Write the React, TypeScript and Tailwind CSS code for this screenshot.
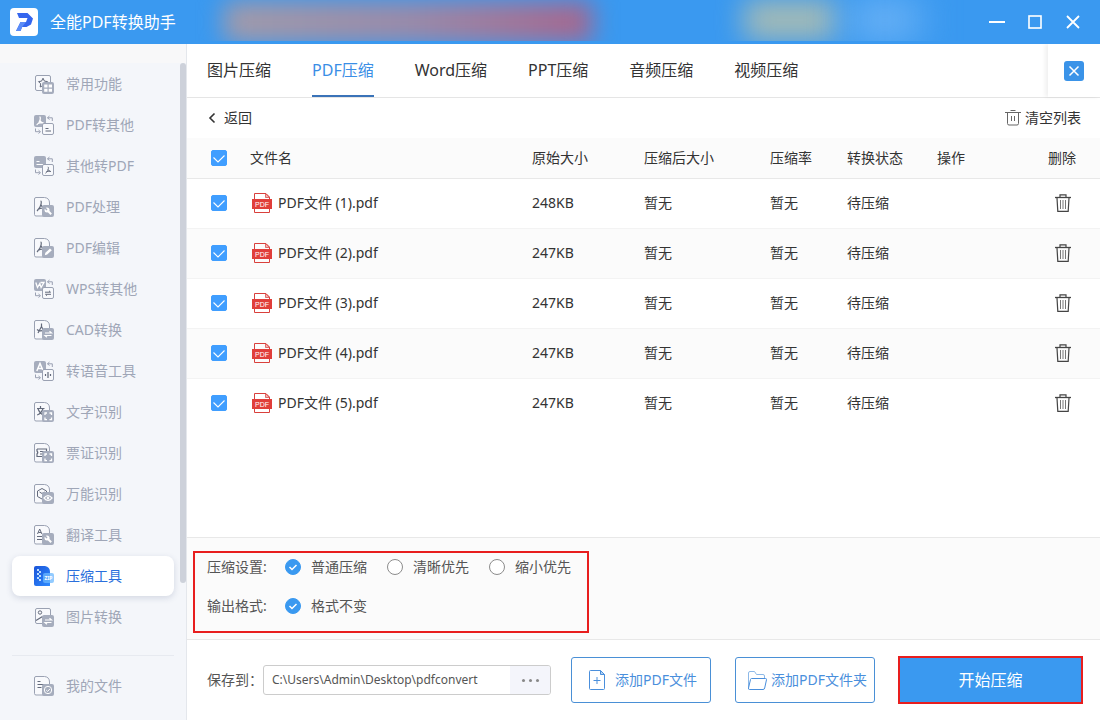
import { useState } from 'react';
import type { ReactNode } from 'react';

const LINE = '#9aa1b2';
const FILL = '#a6adbd';
const DARK = '#636a7b';

interface IconProps {
  children?: ReactNode;
  badge?: ReactNode;
}

// 文档 + 右下角徽标
function DocIcon({ children, badge }: IconProps) {
  return (
    <svg viewBox="0 0 20 20" className="w-5 h-5 shrink-0" fill="none" aria-hidden="true">
      <path d="M2 .5h8.5q5 .5 5 5.5v13H2A1.5 1.5 0 0 1 .5 17.5V2A1.5 1.5 0 0 1 2 .5z" stroke={LINE} fill="#f8f9fc" />
      {children}
      <rect x="8" y="8" width="12" height="12" rx="2" fill={FILL} />
      {badge}
    </svg>
  );
}

// 两个方块互相转换
function SwapIcon({ children, badge }: IconProps) {
  return (
    <svg viewBox="0 0 20 20" className="w-5 h-5 shrink-0" fill="none" aria-hidden="true">
      <rect width="12" height="12" rx="2" fill={FILL} />
      {children}
      <rect x="8.5" y="8.5" width="11" height="11" rx="1.5" stroke={LINE} fill="#f8f9fc" />
      {badge}
      <path d="M15.5 1l-2 1.8 2 1.7M13.5 2.8h4.8V6" stroke={LINE} />
      <path d="M1.5 13.5v3.2h4.3M4.5 15l2 1.7-2 1.8" stroke={LINE} />
    </svg>
  );
}

function PictureIcon({ children, badge }: IconProps) {
  return (
    <svg viewBox="0 0 20 20" className="w-5 h-5 shrink-0" fill="none" aria-hidden="true">
      <rect x="1.5" y="1.5" width="15" height="15" rx="1.5" stroke={LINE} fill="#f8f9fc" />
      {children}
      <rect x="8" y="8" width="12" height="12" rx="2" fill={FILL} />
      {badge}
    </svg>
  );
}

const acrobat = 'M6.500 4c1 0 .8 1.500.6 2.800C6.700 9 5.200 12 3 14M6.800 7.500c.6 1.500 1.500 2.500 3 3.500M3.800 12.500c1.500-1 3.500-1.400 5.500-1.500';

const wrench = (
  <>
    <circle cx="13" cy="13" r="2.500" fill="#fff" />
    <path d="M14 14l3.200 3.200" stroke="#fff" strokeWidth="2" />
    <path d="M10.500 10.500l2.500 2.500" stroke={FILL} strokeWidth="1.400" />
  </>
);
const scan = (
  <path d="M11 13v-2h2M15.500 11h2v2M17.500 15.500v2.200h-2M13 17.700h-2v-2.200" stroke="#fff" strokeWidth="1.300" />
);
const exchange = (
  <path d="M11 13h6.500l-2-1.800M17.500 15.500H11l2 1.800" stroke="#fff" strokeWidth="1.200" />
);

const navItems = [
  {
    label: '常用功能',
    icon: (
      <PictureIcon badge={<path d="M10.200 10.400h3.300v3.100h-3.300zM14.700 10.400H18v3.100h-3.300zM10.200 14.700h3.300v3.100h-3.300zM14.700 14.700H18v3.100h-3.300z" fill="#fff" />}>
        <path d="M9 4.200l1.400 2.900 3.100.5-2.200 2.200.5 3.200L9 11.500l-2.800 1.500.5-3.200-2.200-2.200 3.100-.5z" stroke={DARK} />
      </PictureIcon>
    ),
  },
  {
    label: 'PDF转其他',
    icon: (
      <SwapIcon badge={<path d="M11.500 13.500h3M11.500 16h5.500" stroke={DARK} />}>
        <path d="M5.500 2c1 0 .9 1.500.6 2.800C5.600 7 4.300 9 2.600 10M6 5.500C6.800 7 8 8 9.800 8.200M3.600 8.600c1.500-.7 3-.9 4.800-.9" stroke="#fff" strokeWidth="1.300" />
      </SwapIcon>
    ),
  },
  {
    label: '其他转PDF',
    icon: (
      <SwapIcon badge={<path d="M13.800 11c.9 0 .7 1.200.4 2.200-.4 1.600-1.300 3-2.700 4M14.100 13.600c.6 1.100 1.500 1.800 2.900 2M12.300 15.800c1.200-.5 2.400-.6 3.700-.6" stroke={DARK} />}>
        <path d="M2.500 5.500h3M2.500 8.500h7" stroke="#fff" strokeWidth="1.200" />
      </SwapIcon>
    ),
  },
  { label: 'PDF处理', icon: <DocIcon badge={wrench}><path d={acrobat} stroke={DARK} strokeWidth="1.200" /></DocIcon> },
  {
    label: 'PDF编辑',
    icon: (
      <DocIcon badge={<path d="M10.800 17.200l.6-2.400 4.600-4.400 1.800 1.800-4.600 4.400z" fill="#fff" />}>
        <path d={acrobat} stroke={DARK} strokeWidth="1.200" />
      </DocIcon>
    ),
  },
  {
    label: 'WPS转其他',
    icon: (
      <SwapIcon badge={<path d="M11 13.200h5.500l-1.500-1.400M17 15.300h-5.500l1.500 1.400" stroke={DARK} />}>
        <path d="M1.800 3.500l1.700 5 2.300-4 1.300 4 2.900-5H6.500" stroke="#fff" strokeWidth="1.300" />
      </SwapIcon>
    ),
  },
  {
    label: 'CAD转换',
    icon: (
      <DocIcon badge={exchange}>
        <path d="M7.500 3.500v3M7.500 6.500L4 13M7.500 6.500l2.500 5M3 9.500q3 2.500 7 .5" stroke={DARK} strokeWidth="1.200" />
      </DocIcon>
    ),
  },
  {
    label: '转语音工具',
    icon: (
      <SwapIcon badge={<path d="M11.500 13v2M14 11v6M16.500 13v2" stroke={DARK} strokeWidth="1.200" />}>
        <path d="M2.800 10L6 2.500 9.200 10M4 7.500h4" stroke="#fff" strokeWidth="1.500" />
      </SwapIcon>
    ),
  },
  {
    label: '文字识别',
    icon: (
      <DocIcon badge={scan}>
        <path d="M6.500 4v2M3 6.500h7.500M4 6.500c1 3.500 3 5.500 5.500 6.500M9 6.500c-1 3.500-3 5.500-5.800 6.500" stroke={DARK} strokeWidth="1.200" />
      </DocIcon>
    ),
  },
  {
    label: '票证识别',
    icon: (
      <DocIcon badge={scan}>
        <path d="M3 6h9.500v2.500M3 6v2q1.500 1.500 0 3v2.500h6M6 8.500h4M6 11h2.500" stroke={DARK} strokeWidth="1.200" />
      </DocIcon>
    ),
  },
  {
    label: '万能识别',
    icon: (
      <DocIcon
        badge={
          <>
            <path d="M10 14q4-4.800 8 0-4 4.800-8 0z" stroke="#fff" strokeWidth="1.200" />
            <circle cx="14" cy="14" r="1.300" fill="#fff" />
          </>
        }
      >
        <path d="M8 4.500l4.500 2.500v5.500L8 15l-4.500-2.500V7zM5.500 8L8 9.500 10.500 8" stroke={DARK} />
      </DocIcon>
    ),
  },
  {
    label: '翻译工具',
    icon: (
      <DocIcon badge={wrench}>
        <path d="M3.500 9L5.700 4l2.200 5M4.300 7.500h2.800M3 11.500h5M3 14.500h5" stroke={DARK} />
      </DocIcon>
    ),
  },
  {
    label: '压缩工具',
    icon: (
      <svg viewBox="0 0 20 20" className="w-5 h-5 shrink-0" aria-hidden="true">
        <defs>
          <linearGradient id="zipDoc" x1="0" y1="0" x2="1" y2="1">
            <stop offset="0" stopColor="#1a54d8" />
            <stop offset="1" stopColor="#2f8bff" />
          </linearGradient>
        </defs>
        <path d="M2 0h9q5 1 5 6v14H2a2 2 0 0 1-2-2V2a2 2 0 0 1 2-2z" fill="url(#zipDoc)" />
        <path d="M3 3h2v2H3zM5 5h2v2H5zM3 7h2v2H3zM5 9h2v2H5zM3 11h2v2H3zM5 13h2v2H5z" fill="#b9dcff" />
        <rect x="9" y="7" width="11" height="10" rx="2" fill="#6db9ff" fillOpacity=".75" />
        <text x="14.500" y="14" textAnchor="middle" fontSize="5" fontWeight="700" fill="#fff">ZIP</text>
      </svg>
    ),
  },
  {
    label: '图片转换',
    icon: (
      <PictureIcon badge={exchange}>
        <circle cx="6" cy="5.500" r="1.700" stroke={DARK} />
        <path d="M2 13.500l6.500-4" stroke={DARK} strokeWidth="1.300" />
      </PictureIcon>
    ),
  },
];

const filesIcon = (
  <DocIcon
    badge={
      <>
        <circle cx="14" cy="14" r="3.700" stroke="#fff" />
        <path d="M12.200 14l1.400 1.400 2.300-2.400" stroke="#fff" />
      </>
    }
  >
    <path d="M3.500 5.500h3M3.500 8.500h7M3.500 11.500h4" stroke={DARK} />
  </DocIcon>
);

const tabs = ['图片压缩', 'PDF压缩', 'Word压缩', 'PPT压缩', '音频压缩', '视频压缩'];

const files = [
  { name: 'PDF文件 (1).pdf', size: '248KB' },
  { name: 'PDF文件 (2).pdf', size: '247KB' },
  { name: 'PDF文件 (3).pdf', size: '247KB' },
  { name: 'PDF文件 (4).pdf', size: '247KB' },
  { name: 'PDF文件 (5).pdf', size: '247KB' },
];

function Checkbox({ label }: { label: string }) {
  return (
    <span className="grid w-4 h-4">
      <input
        type="checkbox"
        defaultChecked
        aria-label={label}
        className="peer appearance-none col-start-1 row-start-1 w-4 h-4 rounded-xs border border-[#409eff] checked:bg-[#409eff]"
      />
      <svg viewBox="0 0 16 16" className="pointer-events-none col-start-1 row-start-1 hidden w-4 h-4 peer-checked:block" fill="none">
        <path d="M2.500 7.500l4.500 4.500 6.500-6.500" stroke="#fff" strokeWidth="1.100" />
      </svg>
    </span>
  );
}

function Radio({ name, label, checked }: { name: string; label: string; checked?: boolean }) {
  return (
    <label className="flex items-center gap-2.5">
      <span className="grid w-4 h-4">
        <input
          type="radio"
          name={name}
          defaultChecked={checked}
          className="peer appearance-none col-start-1 row-start-1 w-4 h-4 rounded-full border border-[#8c8c8c] bg-white checked:border-[#3a99f0] checked:bg-[#3a99f0]"
        />
        <svg viewBox="0 0 16 16" className="pointer-events-none col-start-1 row-start-1 hidden w-4 h-4 peer-checked:block" fill="none">
          <path d="M4.500 8l2.500 2.500 4.500-4.500" stroke="#fff" strokeWidth="1.500" />
        </svg>
      </span>
      {label}
    </label>
  );
}

function PdfIcon() {
  return (
    <svg viewBox="0 0 20 20" className="w-5 h-5 shrink-0" fill="none" aria-hidden="true">
      <path d="M2.500 6.500v-6h11.500l3.500 3.500v2.500M2.500 15.500v4h15v-4" stroke="#d9403c" />
      <path d="M13.500.5v4h4z" fill="#f3b3b0" stroke="#d9403c" strokeWidth=".7" />
      <rect y="6" width="20" height="10" fill="#e03e3a" />
      <text x="10" y="13.800" textAnchor="middle" fontSize="7" fill="#fff" fontFamily="Liberation Sans">PDF</text>
    </svg>
  );
}

function TrashIcon() {
  return (
    <svg viewBox="0 0 16 18" className="w-4 h-[18px]" fill="none" stroke="#444" aria-hidden="true">
      <path d="M0 3.500h16" strokeWidth="1.300" />
      <path d="M5 3V.8h6V3" strokeWidth="1.200" />
      <path d="M2 4l.8 13.300h10.400L14 4" strokeWidth="1.200" />
      <path d="M5.500 6v9M8 6v9M10.500 6v9" stroke="#777" />
    </svg>
  );
}

function TitleBar() {
  return (
    <header className="relative flex items-center h-11 px-2.5 bg-[#3a99f0] text-white">
      <div className="absolute inset-x-0 top-0 h-[41px] overflow-hidden">
        <div className="absolute left-[224px] top-0.5 w-[368px] h-10 blur-[12px] bg-linear-to-r from-[#a59ba8] via-[#9f8aa5] to-[#a9648a]" />
        <div className="absolute left-[744px] top-0 w-[92px] h-10 blur-[14px] bg-[#a5bbb5]" />
        <div className="absolute left-[850px] top-0 w-[70px] h-10 blur-[18px] bg-[#6ab2f5]" />
      </div>
      <div className="relative flex items-center gap-3 w-full">
        <svg viewBox="0 0 28 28" className="w-7 h-7" aria-hidden="true">
          <rect width="28" height="28" rx="4" fill="#fff" />
          <path d="M7 5h10.500l5.500 5.500-2 6-4.500 2.500H12l-1.500 4H6l4.500-9H16l1.500-4H9z" fill="#3566ee" />
          <path d="M10.500 14L6 23h4.500l2-4.500 3.500-4.500z" fill="#5b8cf8" />
        </svg>
        <h1 className="text-base">全能PDF转换助手</h1>
        <div className="flex items-center gap-[22px] ml-auto pr-[9px]">
          <button aria-label="最小化">
            <svg viewBox="0 0 16 16" className="w-4 h-4" fill="none" stroke="#fff">
              <path d="M0 8h16" strokeWidth="2" />
            </svg>
          </button>
          <button aria-label="最大化">
            <svg viewBox="0 0 16 16" className="w-4 h-4" fill="none" stroke="#fff">
              <rect x="2" y="2" width="12" height="12" strokeWidth="1.600" />
            </svg>
          </button>
          <button aria-label="关闭">
            <svg viewBox="0 0 16 16" className="w-4 h-4" fill="none" stroke="#fff">
              <path d="M2 2l12 12M14 2L2 14" strokeWidth="1.800" />
            </svg>
          </button>
        </div>
      </div>
    </header>
  );
}

function Sidebar() {
  const [active, setActive] = useState('压缩工具');

  return (
    <aside className="flex flex-col w-[187px] shrink-0 border-r border-[#e4e7ec] bg-[#f4f6fa] text-sm text-[#9fa6b7]">
      <div className="h-[19px] bg-[#f8f8f9]" />
      <div className="flex">
        <nav className="flex flex-col flex-1 gap-px pt-px pl-3 pr-1.5">
          {navItems.map((item) => (
            <button
              key={item.label}
              onClick={() => setActive(item.label)}
              className={`flex items-center gap-3 h-10 pl-[22px] rounded-lg ${
                active === item.label ? 'bg-white text-[#2a6fdc] shadow-[0_2px_6px_rgba(60,80,120,0.18)]' : ''
              }`}
            >
              {item.icon}
              {item.label}
            </button>
          ))}
        </nav>
        <div className="w-1.5 h-[520px] rounded-full bg-[#cdd1da]" />
      </div>
      <div className="mx-3 mt-[18px] border-t border-[#e7eaf0]" />
      <button className="flex items-center gap-3 h-10 mt-2.5 ml-3 pl-[22px]">
        {filesIcon}
        我的文件
      </button>
    </aside>
  );
}

function FileTable() {
  return (
    <table className="w-full table-fixed text-left text-sm text-[#333]">
      <colgroup>
        <col className="w-[63px]" />
        <col />
        <col className="w-28" />
        <col className="w-[126px]" />
        <col className="w-[77px]" />
        <col className="w-[90px]" />
        <col className="w-[111px]" />
        <col className="w-[52px]" />
      </colgroup>
      <thead>
        <tr className="h-10 bg-[#fbfbfb] border-b border-[#e8e8e8] [&>th]:font-normal">
          <th className="pl-6"><Checkbox label="全选" /></th>
          <th>文件名</th>
          <th>原始大小</th>
          <th>压缩后大小</th>
          <th>压缩率</th>
          <th>转换状态</th>
          <th>操作</th>
          <th>删除</th>
        </tr>
      </thead>
      <tbody>
        {files.map((file) => (
          <tr key={file.name} className="h-[50px] border-b border-[#f3f3f3] even:bg-[#fbfbfb] last:border-b-0">
            <td className="pl-6"><Checkbox label={file.name} /></td>
            <td>
              <span className="flex items-center gap-1.5 pl-0.5">
                <PdfIcon />
                {file.name}
              </span>
            </td>
            <td>{file.size}</td>
            <td>暂无</td>
            <td>暂无</td>
            <td>待压缩</td>
            <td />
            <td className="pl-[7px]">
              <button aria-label={`删除 ${file.name}`} className="flex"><TrashIcon /></button>
            </td>
          </tr>
        ))}
      </tbody>
    </table>
  );
}

export default function App() {
  const [tab, setTab] = useState('PDF压缩');

  return (
    <div className="flex flex-col min-h-screen bg-white font-['Noto_Sans','Noto_Sans_CJK_SC',sans-serif]">
      <TitleBar />
      <div className="flex flex-1">
        <Sidebar />
        <main className="flex flex-col flex-1 min-w-0">
          {/* 顶部标签 */}
          <div className="flex justify-between h-[54px] border-b border-[#e5e5e5]">
            <div className="flex gap-[41px] pl-5">
              {tabs.map((name) => (
                <button
                  key={name}
                  onClick={() => setTab(name)}
                  className={`border-b-2 text-base whitespace-nowrap ${
                    tab === name ? 'border-b-[#3a73b8] text-[#3a8ee6]' : 'border-b-transparent text-[#333]'
                  }`}
                >
                  {name}
                </button>
              ))}
            </div>
            <div className="flex items-center px-4 shadow-[-3px_0_4px_rgba(0,0,0,0.06)]">
              <button aria-label="关闭面板" className="flex items-center justify-center w-5 h-5 rounded-[3px] bg-[#3a93e8]">
                <svg viewBox="0 0 12 12" className="w-3 h-3" fill="none" stroke="#fff" strokeWidth="1.500">
                  <path d="M1.500 1.500l9 9M10.500 1.500l-9 9" />
                </svg>
              </button>
            </div>
          </div>

          {/* 返回 / 清空 */}
          <div className="flex items-center justify-between h-10 pl-5 pr-[19px] text-sm text-[#333]">
            <button className="flex items-center gap-2">
              <svg viewBox="0 0 9 12" className="w-[9px] h-3" fill="none" stroke="#333" strokeWidth="1.600">
                <path d="M7.500 1.500L3 6l4.500 4.500" />
              </svg>
              返回
            </button>
            <button className="flex items-center gap-1">
              <svg viewBox="0 0 16 16" className="w-4 h-4" fill="none" stroke="#666" aria-hidden="true">
                <path d="M0 2.500h16M5.500.5h5M2.500 2.500v11a1.500 1.500 0 0 0 1.500 1.500h8a1.500 1.500 0 0 0 1.500-1.500v-11M6.500 6v5M9.500 6v5" />
              </svg>
              清空列表
            </button>
          </div>

          <div className="flex-1">
            <FileTable />
          </div>

          {/* 压缩设置 */}
          <div className="flex border-y border-[#e8e8e8] bg-[#fbfbfb] pt-[13px] pb-1.5 pl-1.5 text-sm text-[#555]">
            <div className="flex flex-col gap-[19px] w-[396px] h-[82px] pt-1 pl-3 border-2 border-[#e81e1e]">
              <div className="flex items-center h-5">
                <span className="w-[78px]">压缩设置:</span>
                <div className="flex gap-5">
                  <Radio name="level" label="普通压缩" checked />
                  <Radio name="level" label="清晰优先" />
                  <Radio name="level" label="缩小优先" />
                </div>
              </div>
              <div className="flex items-center h-5">
                <span className="w-[78px]">输出格式:</span>
                <Radio name="format" label="格式不变" checked />
              </div>
            </div>
          </div>

          {/* 底部操作 */}
          <footer className="flex items-center h-20 pl-5 pr-[17px] text-sm text-[#555]">
            <label htmlFor="path" className="w-14 shrink-0">保存到：</label>
            <div className="flex w-72 h-[30px] border border-[#ccc] rounded-[3px] overflow-hidden">
              <input
                id="path"
                defaultValue="C:\Users\Admin\Desktop\pdfconvert"
                className="flex-1 min-w-0 px-2 text-xs outline-none"
              />
              <button aria-label="浏览" className="flex items-center justify-center gap-1 w-10 bg-[#f4f5fb]">
                <span className="w-[3px] h-[3px] rounded-full bg-[#888]" />
                <span className="w-[3px] h-[3px] rounded-full bg-[#888]" />
                <span className="w-[3px] h-[3px] rounded-full bg-[#888]" />
              </button>
            </div>
            <button className="flex items-center justify-center gap-2.5 w-[140px] h-[46px] ml-5 pl-1 border border-[#4a90d6] rounded-[3px] text-[#4a8fdc] whitespace-nowrap">
              <svg viewBox="0 0 16 20" className="w-4 h-5" fill="none" stroke="#4a8fdc" aria-hidden="true">
                <path d="M11.500.5H1.500a1 1 0 0 0-1 1v17a1 1 0 0 0 1 1h13a1 1 0 0 0 1-1v-14zM8 7v7M4.500 10.500h7" />
                <path d="M11.500.5v4h4z" fill="#b5d3f3" />
              </svg>
              添加PDF文件
            </button>
            <button className="flex items-center justify-center gap-1 w-[140px] h-[46px] ml-6 pl-1 border border-[#4a90d6] rounded-[3px] text-[#4a8fdc] whitespace-nowrap">
              <svg viewBox="0 0 20 19" className="w-5 h-[19px] shrink-0" fill="none" stroke="#4a8fdc" aria-hidden="true">
                <path d="M1.500 16.500V2A1.500 1.500 0 0 1 3 .5h4.500l2 3H16A1.500 1.500 0 0 1 17.500 5v2.500" stroke="#8db9e8" />
                <path d="M4.500 7.500h14q1.200 0 1 1.200l-1.800 8.300q-.3 1.500-1.700 1.500H2.500q-1.300 0-1-1.500l2-8.500q.2-1 1-1z" />
              </svg>
              添加PDF文件夹
            </button>
            <button className="w-[185px] h-12 ml-auto border-2 border-[#e81e1e] bg-[#3a99f0] text-base text-white">
              开始压缩
            </button>
          </footer>
        </main>
      </div>
    </div>
  );
}
